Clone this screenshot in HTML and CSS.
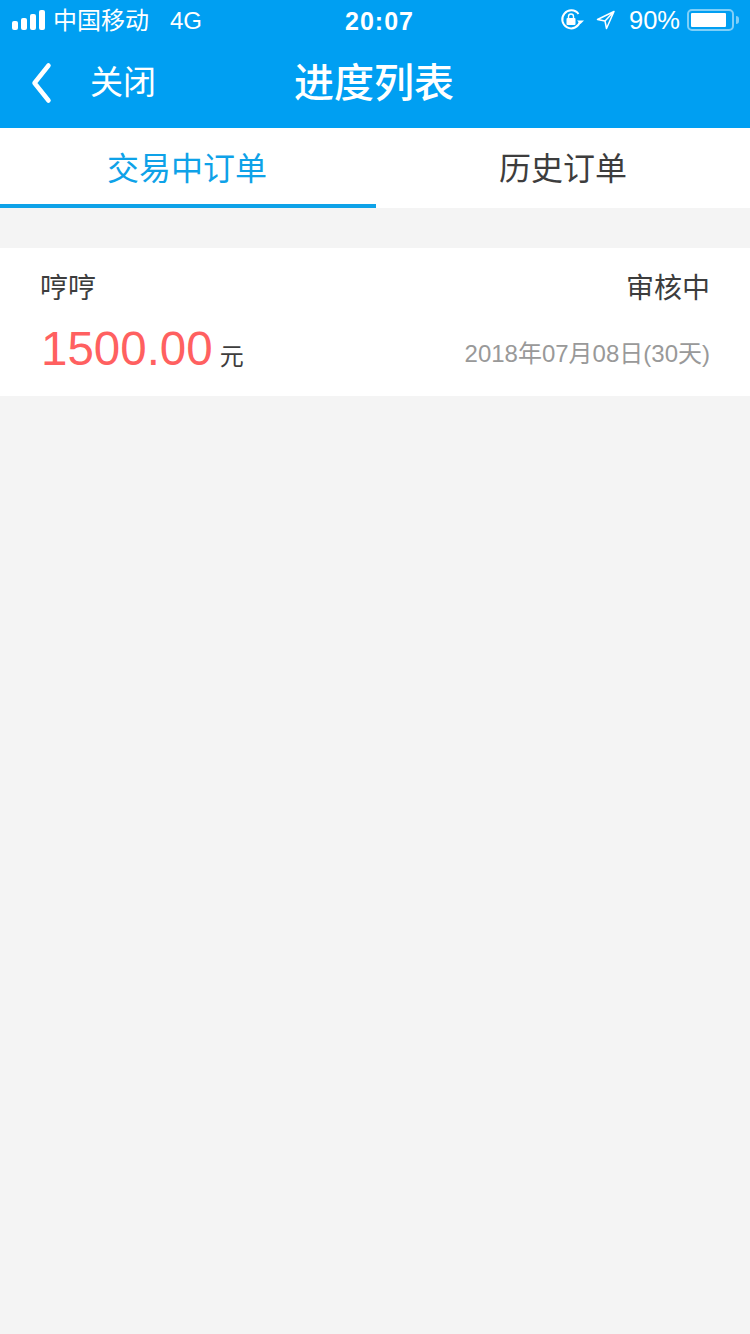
FILE: index.html
```html
<!DOCTYPE html>
<html lang="zh-CN">
<head>
<meta charset="utf-8">
<title>进度列表</title>
<link rel="stylesheet" href="styles.css">
</head>
<body>
<header class="top">
  <div class="status">
    <div class="status-left">
      <div class="signal"><i class="s1"></i><i class="s2"></i><i class="s3"></i><i class="s4"></i></div>
      <span class="carrier">中国移动</span>
      <span class="net">4G</span>
    </div>
    <div class="time">20:07</div>
    <div class="status-right">
      <svg class="lock" width="24" height="24" viewBox="0 0 24 24">
        <path d="M20 13.500A9 9 0 1 1 18.500 6" fill="none" stroke="#fff" stroke-width="2"/>
        <path d="M17 12.500h7l-3.500 3.600z" fill="#fff"/>
        <rect x="6.500" y="10" width="9" height="7" rx="1" fill="#fff"/>
        <path d="M8.500 10.500V8.500a2.500 2.500 0 0 1 5 0v2" fill="none" stroke="#fff" stroke-width="1.400"/>
      </svg>
      <svg class="arrow" width="20" height="20" viewBox="0 0 20 20">
        <path d="M18 1.500 1.500 9.500 9 11 10.500 18.500z M18 1.500 9 11" fill="none" stroke="#fff" stroke-width="1.500" stroke-linejoin="round"/>
      </svg>
      <span class="pct">90%</span>
      <div class="battery"><div class="fill"></div></div>
      <div class="nub"></div>
    </div>
  </div>
  <div class="nav">
    <div class="nav-left">
      <svg class="back" width="22" height="42" viewBox="0 0 22 42">
        <path d="M18.500 3.500 4.500 21l14 17.500" fill="none" stroke="#fff" stroke-width="4.500" stroke-linecap="round" stroke-linejoin="round"/>
      </svg>
      <span class="close">关闭</span>
    </div>
    <h1 class="title">进度列表</h1>
  </div>
</header>
<nav class="tabs">
  <div class="tab active">交易中订单</div>
  <div class="tab">历史订单</div>
</nav>
<main class="list">
  <section class="order">
    <div class="row">
      <span class="name">哼哼</span>
      <span class="state">审核中</span>
    </div>
    <div class="row row-bottom">
      <span class="money"><span class="amount">1500.00</span><span class="unit">元</span></span>
      <span class="date">2018年07月08日(30天)</span>
    </div>
  </section>
</main>
</body>
</html>
```
FILE: styles.css
```css
* { box-sizing: border-box; }
html, body { margin: 0; padding: 0; }
body {
  width: 750px;
  height: 1334px;
  overflow: hidden;
  background: #f4f4f4;
  font-family: "Liberation Sans", "Noto Sans CJK SC", sans-serif;
}
.top { background: #009ff2; color: #fff; height: 128px; }
.status {
  height: 40px;
  display: flex;
  align-items: center;
  justify-content: space-between;
  position: relative;
  padding: 0 11px 0 12px;
}
.status-left, .status-right { display: flex; align-items: center; }
.signal { display: flex; align-items: flex-end; gap: 3px; width: 33px; }
.signal i { display: block; width: 6px; background: #fff; border-radius: 2px; }
.s1 { height: 9px; } .s2 { height: 12px; } .s3 { height: 16px; } .s4 { height: 20px; }
.carrier { font-size: 24px; line-height: 36px; margin: 1px 0 0 8px; font-weight: 400; }
.net { font-size: 24px; margin: 2px 0 0 21px; font-weight: 400; }
.time {
  position: absolute;
  left: 345px;
  top: 6px;
  font-size: 25px;
  line-height: 30px;
  font-weight: 700;
  letter-spacing: 1px;
}
.lock { margin-right: 12px; }
.arrow { margin-right: 13px; }
.pct { font-size: 25.5px; margin-right: 7px; }
.battery {
  width: 47px;
  height: 22px;
  border: 2px solid #7fcff8;
  border-radius: 5px;
  padding: 2px;
}
.fill { width: 35px; height: 14px; background: #fff; border-radius: 1px; }
.nub { width: 3px; height: 8px; background: #7fcff8; border-radius: 0 3px 3px 0; margin-left: 2px; }
.nav { height: 88px; position: relative; display: flex; align-items: center; justify-content: center; }
.nav-left { position: absolute; left: 30px; top: 22px; display: flex; align-items: center; }
.close { font-size: 33px; margin-left: 38px; line-height: 42px; font-weight: 400; }
.title { margin: 0 2px 2px 0; font-size: 40px; font-weight: 500; line-height: 50px; }
.tabs { display: flex; height: 80px; background: #fff; }
.tab {
  flex: 1 1 374px;
  display: flex;
  align-items: center;
  justify-content: center;
  font-size: 32px;
  color: #3d3d3d;
  padding-bottom: 4px;
}
.tab.active { flex: 0 0 376px; color: #0ea2e8; border-bottom: 4px solid #0ea2e8; padding: 0 2px 0 0; font-weight: 400; }
.list { padding-top: 40px; }
.order { background: #fff; height: 148px; padding: 0 40px 0 41px; }
.row { display: flex; justify-content: space-between; align-items: center; height: 78px; padding-bottom: 3px; }
.row-bottom { height: 44px; align-items: baseline; margin-top: -5px; padding-bottom: 0; }
.name, .state { font-size: 28px; color: #3d3d3d; }
.name { margin-left: -1px; }
.amount { font-size: 47.5px; color: #ff6060; }
.unit { font-size: 24px; color: #3d3d3d; margin-left: 7px; }
.date { font-size: 24px; line-height: 34px; margin-top: 16px; align-self: flex-start; color: #999; }
```
